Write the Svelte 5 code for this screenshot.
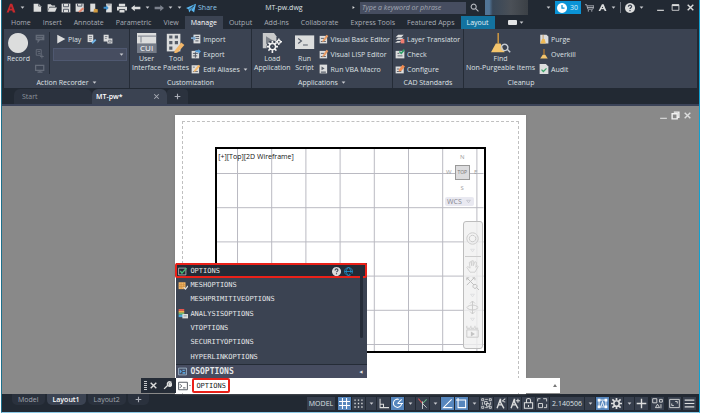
<script>
  let command = $state("OPTIONS");
  let activeTab = $state("Manage");

  const tabs = [
    "Home", "Insert", "Annotate", "Parametric", "View", "Manage", "Output",
    "Add-ins", "Collaborate", "Express Tools", "Featured Apps", "Layout",
  ];

  const suggestions = [
    { name: "MESHOPTIONS", icon: "mesh" },
    { name: "MESHPRIMITIVEOPTIONS" },
    { name: "ANALYSISOPTIONS", icon: "analysis" },
    { name: "VTOPTIONS" },
    { name: "SECURITYOPTIONS" },
    { name: "HYPERLINKOPTIONS" },
  ];

  const quickAccess = ["new", "open", "save", "saveas", "openweb", "saveweb", "print"];

  const statusItems = [
    { icon: "grid", label: "Grid", on: true },
    { icon: "snap", label: "Snap" },
    { caret: true },
    { icon: "ortho", label: "Ortho" },
    { icon: "polar", label: "Polar tracking", on: true },
    { caret: true },
    { icon: "iso", label: "Isometric" },
    { caret: true },
    { icon: "otrack", label: "Object tracking", on: true },
    { icon: "osnap", label: "Object snap", on: true },
    { caret: true },
    { icon: "select", label: "Selection" },
    { icon: "person", label: "Annotation visibility" },
    { icon: "personadd", label: "Auto scale" },
    { icon: "lock", label: "Lock viewport" },
    { icon: "maxview", label: "Maximize viewport" },
    { text: "2.140506" },
    { caret: true },
    { icon: "sync", label: "Sync scale", on: true },
    { icon: "gear", label: "Workspace" },
    { caret: true },
    { icon: "plus", label: "Annotation monitor" },
    { icon: "isolate", label: "Isolate objects", wide: true },
    { icon: "clean", label: "Clean screen", wide: true },
    { icon: "menu", label: "Customization" },
  ];

  const W = "#dcdddd";
  const G = "#7b818c";
  const B = "#6fb3e6";
  const O = "#f2b76a";

  // each part is [path, colour, stroke width]; without a width the path is filled
  const icons = {
    logo: [["M1 15L6.500 1h3.500l5 14h-4l-1-3H5.500l-1 3zM6.500 9h2.800L8 5z", "#c8292d"]],
    caret: [["M2 5h12l-6 7z", "#c9cbd0"]],
    right: [["M5 3l7 5-7 5z", W]],
    new: [["M1 1h8l4 4v9H1z", W], ["M9 1v4h4", "#222933", 1]],
    open: [["M1 2h5l2 2h5v2H4l-3 7z", W], ["M4 7h12l-3 7H1z", W]],
    save: [["M1 1h14v14H1z", W], ["M4 1v5h8V1M4 15v-5h8v5", "#4d5461", 1.500]],
    saveas: [["M1 1h13v13H1z", W], ["M4 1v4h7V1", "#4d5461", 1.500], ["M5 14l7-7 3 2-7 6z", "#e1836b"]],
    openweb: [["M2 1h8v13H2z", W], ["M8 9l6 1v5H7z", "#d19a3f"]],
    saveweb: [["M5 1h9v14H5z", W], ["M1 6h4V3l4 5-4 4V9H1z", "#3a8fd0"], ["M7 3h5", "#4d5461", 1]],
    print: [["M3 1h10v4H3zM0 6h16v6h-3v-2H3v2H0zM4 11h8v4H4z", W]],
    undo: [["M0 8l6-5v3h9v4H6v3z", W]],
    redo: [["M16 8l-6-5v3H1v4h9v3z", G]],
    share: [["M0 8L16 1l-3 14-5-4-3 4-1-5z", "#58b5ef"], ["M5 10l8-6-5 7", "#222933", 1]],
    search: [["M10.500 10.500L15 15M6.500 2a4.500 4.500 0 1 0 .1 0", "#b5b8bf", 2]],
    clock: [["M8 0a8 8 0 1 0 .1 0z", "#fff"], ["M8 3v5h4", "#0a93d6", 2]],
    cart: [["M0 3h3l2 8h9l2-6H4M4 8h11", "#b5b8bf", 1.500], ["M5 13h2v2H5zM11 13h2v2h-2z", "#b5b8bf"]],
    autodesk: [["M1 14L7 2h3l5 12h-3l-4-8-4 8z", W], ["M4 10h8", W, 2]],
    help: [["M8 0a8 8 0 1 0 .1 0z", W], ["M5.500 6c0-4 5.500-3 5 0-.3 1.500-2.500 2-2.500 3.500M8 11v2", "#394150", 2]],
    min: [["M2 13h12", W, 2]],
    max: [["M2 3h12v10H2z", W, 1.500], ["M2 4h12", W, 3]],
    close: [["M3 3l10 10M13 3L3 13", W, 2.500]],
    thinclose: [["M4 4l8 8M12 4l-8 8", "#a9adb6", 1.800]],
    plus: [["M8 1v14M1 8h14", W, 2]],
    smallplus: [["M8 3v10M3 8h10", "#a9adb6", 2]],
    record: [["M12.500 0a12.500 12.500 0 1 0 .1 0z", W]],
    message: [["M1 1h14v9H8l-4 5v-5H1z", "#646b78"], ["M3 4h10M3 7h8", "#3b4352", 1]],
    pause: [["M2 1h8v9H2zM4 4h4M5 7h4", "#646b78", 1.500], ["M11 9v6M8 12h6", "#646b78", 1.500]],
    base: [["M1 2h13v8H1zM4 13h8M8 9v5", "#646b78", 2]],
    play: [["M2 1l13 7-13 7z", W]],
    prefs: [["M1 1h9v12H1z", W], ["M3 4h5M3 7h5M3 10h4", "#4d5461", 1], ["M7 13l6-5 2 2-6 6z", B]],
    manage: [["M1 1h8v11H1zM7 7h8v8H7z", W], ["M3 4h4M3 7h3M9 10h4v3H9z", "#4d5461", 1]],
    cui: [["M0 0h24v25H0z", W], ["M1 4h23M5 4v8", "#8b9099", 1.500], ["M0 13h24v12H0z", "#747b87"]],
    palettes: [["M1 1h17v22H1z", W], ["M4 3h4v4H4zM11 3h4v4h-4zM4 10h4v4H4zM11 10h4v4h-4zM4 17h4v4H4z", "#555c68"], ["M11 22l8-10 4 3-8 9-5 2z", O]],
    import: [["M4 1h11v14H4z", W], ["M7 4h6M7 7h6M7 11h5", "#4d5461", 1.500], ["M0 5h4V2l4 5-4 4V8H0z", "#7ca8cf"]],
    export: [["M1 3h12v12H1z", W], ["M3 7h8M3 11h7M7 5v9", "#4d5461", 1.500], ["M7 2h5V0l4 4-4 4V5H7z", "#55a0dc"]],
    alias: [["M1 2h12v13H1z", W], ["M3 12h8M3 5h3", "#6c727c", 1.500], ["M5 10l7-9 3 2-7 8-4 2z", O]],
    load: [["M1 0h14l3 4v15H1z", "#c9cacb"], ["M5 4l8 5-8 5z", "#7d8289"], ["M13 13a4 4 0 1 0 .1 0", "#3b4352", 7], ["M13 13a4 4 0 1 0 .1 0M13 10v2M13 22v3M6 17h3M17 17h3M8 12l2 2M16 20l2 2M8 22l2-2M16 14l2-2", "#f2f2f2", 2], ["M21 9a2 2 0 1 0 .1 0M21 7v2M21 13v2M17 11h2M23 11h2", "#f2f2f2", 1.800]],
    script: [["M0 3h24v17H0z", W], ["M4 7l4 3-4 3M10 15h6", "#555c68", 1.500]],
    editor: [["M1 3h12v12H1z", W], ["M3 7h5M3 12h8", "#5b616c", 1.500], ["M6 10l6-9 3 2-6 8-4 2z", "#e89b63"]],
    macro: [["M1 1h12v14H1z", W], ["M4 4l5 3-5 3z", "#5b616c"], ["M3 13h8", "#5b616c", 2]],
    layer: [["M5 1h9l-4 4H1zM5 6h9l-4 3H1zM4 11h6l-3 3H0z", W], ["M9 8h6v7H9z", "#ee7d70"]],
    check: [["M1 3h14v12H1z", W], ["M4 7h3M4 11h8", "#5b616c", 1.500], ["M7 4l3 3 5-6", "#32a06a", 2.500]],
    configure: [["M1 4h13v11H1z", W], ["M3 8h4M3 12h7", "#5b616c", 1.500], ["M6 9l6-8 4 3-6 7-4 1z", "#ef8b50"]],
    find: [["M8 0h2v13H8z", "#c59343"], ["M6 13h6l5 11H0z", "#f4c56c"], ["M17 14a4 4 0 1 0 .1 0M20 20l4 4", "#c6cbd2", 1.800]],
    purge: [["M2 1h10l3 3v11H2z", W], ["M6 1h1v8H6z", "#b77b2c"], ["M5 8h4l2 7H2z", "#efb953"]],
    overkill: [["M7 0h2v9H7z", "#b77b2c"], ["M6 9h4l4 6H2z", "#f4c56c"]],
    audit: [["M1 0h10l4 4v12H1z", W], ["M4 9l3 3 5-5", "#3ca469", 2]],
    restore: [["M5 2h9v9h-3M2 5h9v9H2z", "#f2f2f2", 2.500]],
    mesh: [["M1 2h11v11H1z", O], ["M1 6h11M1 9h11M5 2v11M9 2v11", "#c98a3a", 1], ["M9 10l3 3 4-5", W, 2]],
    analysis: [["M1 0h9v3H1z", "#e6554d"], ["M1 3h9v3H1z", "#efb14d"], ["M1 6h9v3H1z", "#72bd69"], ["M1 9h7v4H1z", "#4aa5d8"], ["M7 8h9v7H7z", W], ["M9 11h5", "#8b9099", 1.500]],
    options: [["M1 2h13v12H1z", W, 1.200], ["M4 7l3 4 8-9", "#43bd76", 2.500]],
    globe: [["M8 1a7 7 0 1 0 .1 0M1 8h14M8 1c-5 4-5 10 0 14M8 1c5 4 5 10 0 14", "#2696d0", 1.500], ["M9 9l6 6", "#1b2531", 2]],
    sysvar: [["M1 2h14v12H1z", "#b9d4ea", 1.200], ["M3 4l4 4-4 4zM8 5h4v2H8zM8 9h5v3H8z", "#5aa4dc"]],
    wrench: [["M2 14l7-7M9 8c-3-4 1-8 5-6l-3 3 1 2 3-2c1 4-3 6-6 3", W, 2.500]],
    prompt: [["M1 2h14v12H1z", "#4e545d", 1.500], ["M3 5l3 3-3 3M8 11h4", "#4e545d", 1.500]],
    grid: [["M5 0v16M11 0v16M0 5h16M0 11h16", "#fff", 1.500]],
    snap: [["M2 2h2v2H2zM7 2h2v2H7zM12 2h2v2h-2zM2 7h2v2H2zM7 7h2v2H7zM12 7h2v2h-2zM2 12h2v2H2zM7 12h2v2H7zM12 12h2v2h-2z", W]],
    ortho: [["M3 1v13h13M3 9h5v5", W, 1.500]],
    polar: [["M14 8a6 6 0 1 1-4-6M8 8h8M8 8l6-6", "#fff", 1.500]],
    iso: [["M2 1l6 7", "#d64f50", 1.500], ["M14 2l-6 6", "#68b883", 1.500], ["M8 5v11M8 8l6 6", W, 1.200]],
    otrack: [["M14 2L2 14h13", "#fff", 1.500]],
    osnap: [["M3 3h11v11H3zM0 3h6M3 0v6", "#fff", 1.500]],
    select: [["M1 1h3v3H1zM12 1h3v3h-3zM1 12h3v3H1zM12 12h3v3h-3zM6 2h4M6 14h4M2 6v4M14 6v4M5 5h4v4H5zM8 8h4v4H8z", W, 1.200]],
    person: [["M8 1L3 15M8 6l5 9M4 10h6M8 1v6", W, 2], ["M10 5l5-4M12 5l3 1", W, 1.500]],
    personadd: [["M8 1L3 15M8 6l5 9M4 10h6M8 1v6", W, 2], ["M13 1v6M10 4h6", W, 1.500]],
    lock: [["M2 7h12v8H2zM5 7V3c0-3 6-3 6 0v4M8 10v3", W, 1.500]],
    maxview: [["M1 5V1h4M9 1h5v4M14 9v5h-4M2 8h6v6H2z", W, 1.300]],
    sync: [["M3 3h10v10H3z", "#fff", 1.300], ["M1 1h4v4H1zM11 1h4v4h-4zM1 11h4v4H1zM11 11h4v4h-4z", "#fff"], ["M6 12l2-7 2 7", "#fff", 1.300]],
    gear: [["M8 4a4 4 0 1 0 .1 0M8 0v3M8 13v3M0 8h3M13 8h3M2 2l3 3M11 11l3 3M14 2l-3 3M2 14l3-3", W, 2.500]],
    isolate: [["M1 1h6v6H1zM11 2h4v4h-4zM8 9l-3 5h6zM13 9v6", W, 1.300]],
    clean: [["M1 2h14v12H1zM4 8v3h3M9 5h3v3", W, 1.300]],
    menu: [["M1 3h14M1 8h14M1 13h14", W, 1.800]],
    down: [["M2 4h12l-6 8z", "#a9abb4", 1.500]],
    wheel: [["M8 1a7 7 0 1 0 .1 0M8 4a4 4 0 1 0 .1 0", "#cbcbcb", 1.200]],
    pan: [["M5 15L1 9l1-1 3 2-1-7 2-1 1 5V1h2v6l2-5 2 1-1 6 2-2 1 1-4 7z", "#cbcbcb", 1]],
    zoom: [["M1 1l9 9M10 1L1 10M1 4V1h3M8 1h3v3M11 9a2.500 2.500 0 1 0 .1 0M13 13l3 3", "#bebebe", 1.200]],
    orbit: [["M8 0v16M5 3l3-3 3 3M5 13l3 3 3-3M1 8c3-4 11-4 14 0-3 4-11 4-14 0", "#cbcbcb", 1.200]],
    motion: [["M1 1v3h4M6 1v3h4M11 1v3h4M1 6h14v9H1z", "#cbcbcb", 1.200], ["M6 8l5 3-5 3z", "#c4c4c4"]],
  };
</script>

{#snippet icon(name, size = "")}
  <svg class="icon {size}" viewBox={size === "big" ? "0 0 25 25" : "0 0 16 16"} aria-hidden="true">
    {#each icons[name] as [d, color, width]}
      <path {d} fill={width ? "none" : color} stroke={width ? color : "none"} stroke-width={width ?? 0} />
    {/each}
    {#if name === "cui"}
      <text class="cui-text" x="12" y="23">CUI</text>
    {/if}
  </svg>
{/snippet}

{#snippet tool(name, label, caret = false)}
  <button class="tool">
    {@render icon(name)}
    <span>{label}</span>
    {#if caret}{@render icon("caret", "tiny")}{/if}
  </button>
{/snippet}

{#snippet bigTool(name, first, second)}
  <button class="big-tool">
    {@render icon(name, "big")}
    <span>{first}</span>
    {#if second}<span>{second}</span>{/if}
  </button>
{/snippet}

<div class="window">
  <header class="titlebar">
    <div class="quick">
      <button class="logo" aria-label="Application menu">
        {@render icon("logo", "mid")}
        {@render icon("caret", "tiny")}
      </button>
      {#each quickAccess as name}
        <button aria-label={name}>{@render icon(name, "mid")}</button>
      {/each}
      <button aria-label="Undo">{@render icon("undo", "mid")}{@render icon("caret", "tiny")}</button>
      <button aria-label="Redo">{@render icon("redo", "mid")}{@render icon("caret", "tiny")}</button>
      <button aria-label="Customize">{@render icon("caret", "tiny")}</button>
      <button class="share">{@render icon("share", "mid")}<span>Share</span></button>
    </div>
    <h1>MT-pw.dwg</h1>
    <div class="info">
      {@render icon("right", "tiny")}
      <input class="search" type="search" aria-label="Search" placeholder="Type a keyword or phrase" />
      <button aria-label="Search">{@render icon("search")}</button>
      <span class="user"></span>
      {@render icon("caret", "tiny")}
      <button class="trial">{@render icon("clock", "mid")}<span>30</span></button>
      <button aria-label="App store">{@render icon("cart")}</button>
      <button aria-label="Autodesk">{@render icon("autodesk")}{@render icon("caret", "tiny")}</button>
      <span class="divider"></span>
      <button aria-label="Help">{@render icon("help", "mid")}{@render icon("caret", "tiny")}</button>
      <div class="window-controls">
        <button aria-label="Minimize">{@render icon("min")}</button>
        <button aria-label="Maximize">{@render icon("max")}</button>
        <button aria-label="Close">{@render icon("close")}</button>
      </div>
    </div>
  </header>

  <nav class="tabs">
    {#each tabs as tab}
      <button
        class:active={activeTab === tab}
        class:context={tab === "Layout"}
        onclick={() => (activeTab = tab)}
      >{tab}</button>
    {/each}
    <button class="minimize" aria-label="Minimize ribbon">
      <span class="pill"></span>
      {@render icon("caret", "tiny")}
    </button>
  </nav>

  <section class="ribbon">
    <div class="panel recorder">
      <div class="tools">
        {@render bigTool("record", "Record")}
        <div class="stack">
          {@render icon("message")}
          {@render icon("pause")}
          {@render icon("base")}
        </div>
        <div class="macros">
          <div class="macro-buttons">
            {@render tool("play", "Play")}
            <button aria-label="Preference">{@render icon("prefs", "mid")}</button>
            <button aria-label="Manage macros">{@render icon("manage", "mid")}</button>
          </div>
          <div class="macro-select">
            <select aria-label="Available action macro"><option></option></select>
            {@render icon("caret", "tiny")}
          </div>
        </div>
      </div>
      <div class="caption">Action Recorder {@render icon("caret", "tiny")}</div>
    </div>
    <div class="panel customization">
      <div class="tools">
        {@render bigTool("cui", "User", "Interface")}
        {@render bigTool("palettes", "Tool", "Palettes")}
        <div class="stack">
          {@render tool("import", "Import")}
          {@render tool("export", "Export")}
          {@render tool("alias", "Edit Aliases", true)}
        </div>
      </div>
      <div class="caption">Customization</div>
    </div>
    <div class="panel applications">
      <div class="tools">
        {@render bigTool("load", "Load", "Application")}
        {@render bigTool("script", "Run", "Script")}
        <div class="stack">
          {@render tool("editor", "Visual Basic Editor")}
          {@render tool("editor", "Visual LISP Editor")}
          {@render tool("macro", "Run VBA Macro")}
        </div>
      </div>
      <div class="caption">Applications {@render icon("caret", "tiny")}</div>
    </div>
    <div class="panel standards">
      <div class="tools">
        <div class="stack">
          {@render tool("layer", "Layer Translator")}
          {@render tool("check", "Check")}
          {@render tool("configure", "Configure")}
        </div>
      </div>
      <div class="caption">CAD Standards</div>
    </div>
    <div class="panel cleanup">
      <div class="tools">
        {@render bigTool("find", "Find", "Non-Purgeable Items")}
        <div class="stack">
          {@render tool("purge", "Purge")}
          {@render tool("overkill", "Overkill")}
          {@render tool("audit", "Audit")}
        </div>
      </div>
      <div class="caption">Cleanup</div>
    </div>
  </section>

  <nav class="documents">
    <button class="start">Start</button>
    <button class="current">MT-pw* {@render icon("thinclose")}</button>
    <button class="add" aria-label="New drawing">{@render icon("smallplus")}</button>
  </nav>

  <main class="canvas">
    <div class="doc-controls">
      <button aria-label="Minimize drawing">{@render icon("min")}</button>
      <button aria-label="Restore drawing">{@render icon("restore")}</button>
      <button aria-label="Close drawing">{@render icon("close")}</button>
    </div>
    <div class="paper">
      <div class="printable">
        <div class="viewport">
          <svg class="lines" aria-hidden="true">
            <defs>
              <pattern id="cells" width="34.2" height="34.2" x="20" y="24" patternUnits="userSpaceOnUse">
                <path d="M.5 0V34.200M0 .5H34.200" fill="none" stroke="#b9b9c1" />
              </pattern>
            </defs>
            <rect width="100%" height="100%" fill="url(#cells)" />
          </svg>
          <span class="view-label">[+][Top][2D Wireframe]</span>
          <div class="viewcube">
            <span class="north">N</span>
            <span>W</span>
            <span class="cube">TOP</span>
            <span>E</span>
            <span class="south">S</span>
          </div>
          <button class="wcs">WCS {@render icon("down", "tiny")}</button>
          <div class="navbar">
            {@render icon("wheel", "nav")}
            {@render icon("down", "tiny")}
            <hr />
            {@render icon("pan", "nav")}
            {@render icon("zoom", "nav")}
            {@render icon("down", "tiny")}
            {@render icon("orbit", "nav")}
            {@render icon("down", "tiny")}
            {@render icon("motion", "nav")}
          </div>
        </div>
      </div>
    </div>

    <div class="command">
      <div class="suggest">
        <button class="chosen">
          {@render icon("options")}
          <span>OPTIONS</span>
          {@render icon("help")}
          {@render icon("globe")}
        </button>
        <div class="list">
          {#each suggestions as item}
            <button>
              <span class="slot">{#if item.icon}{@render icon(item.icon, "mid")}{/if}</span>
              {item.name}
            </button>
          {/each}
        </div>
        <button class="variable">
          {@render icon("sysvar")}
          <span>OSOPTIONS</span>
          <span class="back">◂</span>
        </button>
        <span class="scroll"></span>
      </div>
      <div class="handle">
        <span class="grip"></span>
        <button aria-label="Close command line">{@render icon("close")}</button>
        <button aria-label="Customize command line">{@render icon("wrench")}</button>
      </div>
      <div class="entry">
        {@render icon("prompt", "mid")}
        <span class="prompt-caret"></span>
        <input aria-label="Command" bind:value={command} />
        <span class="history"></span>
      </div>
    </div>
  </main>

  <footer class="status">
    <nav class="layouts">
      <button>Model</button>
      <button class="active">Layout1</button>
      <button>Layout2</button>
      <button aria-label="New layout">{@render icon("smallplus")}</button>
    </nav>
    <div class="toggles">
      <button class="model">MODEL</button>
      {#each statusItems as item}
        {#if item.caret}
          <button class="more" aria-label="More">{@render icon("caret", "tiny")}</button>
        {:else if item.text}
          <button class="scale">{item.text}</button>
        {:else}
          <button class="toggle" class:on={item.on} class:wide={item.wide} aria-label={item.label}>
            {@render icon(item.icon, "status-icon")}
          </button>
        {/if}
      {/each}
    </div>
  </footer>
</div>

<style>
  :global(body) {
    margin: 0;
    background: #fff;
  }

  .window {
    box-sizing: border-box;
    display: flex;
    flex-direction: column;
    min-height: calc(100vh - 2px);
    margin: 0 2px 0 1px;
    border-left: 1px solid #1c6f8c;
    border-right: 1px solid #12a0cf;
    border-bottom: 1px solid #8cc9e6;
    background: #222933;
    color: #dfe1e4;
    font: 7px/9px "Open Sans", "Noto Sans", sans-serif;
  }

  button {
    display: flex;
    align-items: center;
    padding: 0;
    border: 0;
    background: none;
    color: inherit;
    font: inherit;
    white-space: nowrap;
    cursor: pointer;
  }

  .icon {
    flex: none;
    width: 9px;
    height: 9px;
  }

  .icon.tiny {
    width: 5px;
    height: 5px;
  }

  .icon.mid,
  .tool .icon:first-child,
  .stack > .icon {
    width: 10px;
    height: 10px;
  }

  .icon.status-icon {
    width: 11px;
    height: 11px;
  }

  .icon.big {
    width: 20px;
    height: 20px;
  }

  .cui-text {
    fill: #fff;
    font-size: 10px;
    text-anchor: middle;
  }

  .titlebar {
    display: flex;
    align-items: center;
    height: 15px;
    padding: 0 4px;
  }

  .quick {
    display: flex;
    align-items: center;
    gap: 4px;
  }

  .quick button {
    gap: 4px;
  }

  .quick .logo {
    margin-right: 4px;
  }

  .quick .share {
    gap: 2px;
    color: #8cc4e8;
  }

  h1 {
    flex: 1;
    margin: 0;
    font: inherit;
    text-align: center;
  }

  .info {
    display: flex;
    align-items: center;
    gap: 4px;
  }

  .info button {
    gap: 4px;
  }

  .search {
    box-sizing: border-box;
    width: 106px;
    height: 12px;
    padding: 0 2px;
    border: 0;
    background: #464d60;
    color: #d5d7da;
    font: italic 7px/9px "Open Sans", sans-serif;
  }

  .search::placeholder {
    color: #a4a9b4;
  }

  .user {
    width: 43px;
    height: 15px;
    margin: 0 14px 0 2px;
    background: linear-gradient(90deg, #527597 10%, #384758 18%, #4b5057 60%, #3b4046);
  }

  .info .trial {
    height: 13px;
    padding: 0 3px 0 2px;
    gap: 3px;
    background: #0a93d6;
    color: #d9effb;
  }

  .divider {
    width: 1px;
    height: 11px;
    background: #6b717c;
  }

  .window-controls {
    display: flex;
    gap: 6px;
    margin-left: 8px;
  }

  .tabs {
    display: flex;
    height: 13px;
    margin-top: 1px;
    padding-left: 3px;
  }

  .tabs button {
    padding: 0 6px;
    color: #a9adb5;
  }

  .tabs button.active {
    background: #3b4352;
    color: #fff;
  }

  .tabs button.context {
    background: #1373a0;
    color: #e4f2f8;
  }

  .tabs .minimize {
    gap: 2px;
  }

  .pill {
    width: 9px;
    height: 5px;
    margin-left: 7px;
    border-radius: 1px;
    background: #e3e4e6;
  }

  .ribbon {
    display: flex;
    height: 59px;
    margin: 0 2px;
    background: #3b4352;
  }

  .panel {
    display: flex;
    flex-direction: column;
    box-sizing: border-box;
    border-right: 1px solid #252c37;
  }

  .panel:last-child {
    border-right: 0;
  }

  .recorder {
    width: 126px;
  }

  .customization {
    width: 122px;
  }

  .applications {
    width: 141px;
  }

  .standards {
    width: 71px;
  }

  .cleanup {
    width: 114px;
  }

  .tools {
    display: flex;
    flex: 1;
    gap: 2px;
    padding: 3px 2px 0;
  }

  .applications .tools,
  .cleanup .tools {
    gap: 4px;
  }

  .stack {
    display: flex;
    flex-direction: column;
    justify-content: space-between;
    padding: 2px 0;
  }

  .tool {
    gap: 2px;
    height: 10px;
  }

  .tool .tiny {
    margin-left: 1px;
  }

  .big-tool {
    flex-direction: column;
    align-self: flex-start;
    padding-top: 1px;
  }

  .big-tool .icon {
    margin-bottom: 1px;
  }

  .caption {
    display: flex;
    align-items: center;
    justify-content: center;
    gap: 3px;
    height: 12px;
  }

  .recorder .tools {
    padding-left: 3px;
  }

  .recorder .stack {
    padding-left: 3px;
  }

  .macros {
    flex: 1;
    margin: 0 0 2px 2px;
    padding: 2px 0 0 3px;
    border-left: 1px solid #252c37;
  }

  .macro-buttons {
    display: flex;
    align-items: center;
    gap: 6px;
    padding-left: 3px;
  }

  .macro-select {
    display: flex;
    align-items: center;
    height: 11px;
    margin-top: 4px;
    padding-right: 2px;
    border: 1px solid #4f5870;
    background: #464d60;
  }

  .macro-select select {
    flex: 1;
    width: 20px;
    height: 11px;
    border: 0;
    background: transparent;
    appearance: none;
  }

  .documents {
    display: flex;
    height: 15px;
    margin-top: 1px;
    padding-left: 12px;
    border-bottom: 2px solid #3b4358;
  }

  .documents .start {
    width: 78px;
    padding-left: 8px;
    border-radius: 6px 6px 0 0;
    background: #2b323e;
    color: #8d929c;
  }

  .documents .current {
    justify-content: space-between;
    width: 75px;
    padding: 0 6px 0 4px;
    border-radius: 6px 6px 0 0;
    background: #3b4352;
    color: #fff;
    font-weight: 600;
  }

  .documents .add {
    padding: 0 6px;
    border-radius: 4px 4px 0 0;
    background: #2b323e;
  }

  .canvas {
    position: relative;
    display: flex;
    flex: 1;
    justify-content: center;
    background: #898989;
  }

  .doc-controls {
    position: absolute;
    top: 5px;
    right: 7px;
    display: flex;
    gap: 3px;
  }

  .paper {
    display: flex;
    width: calc(50% + 2px);
    margin-top: 9px;
    background: #fff;
    box-shadow: 0 0 2px #777;
  }

  .printable {
    display: flex;
    flex: 1;
    margin: 6px 7px 0;
    padding: 25px 32px 41px;
    border: 1px dashed #c0c0c0;
    border-bottom: 0;
  }

  .viewport {
    position: relative;
    flex: 1;
    border: 2px solid #000;
  }

  .lines {
    position: absolute;
    width: 100%;
    height: 100%;
  }

  .view-label {
    position: absolute;
    top: 3px;
    left: 1px;
    color: #111;
  }

  .viewcube {
    position: absolute;
    top: 2px;
    right: 4px;
    display: grid;
    grid-template-columns: 8px 15px 8px;
    grid-template-rows: 12px 15px 12px;
    gap: 2px;
    place-items: center;
    color: #a0a0a0;
    font-size: 6px;
  }

  .north,
  .south {
    grid-column: 1 / -1;
  }

  .cube {
    box-sizing: border-box;
    width: 15px;
    height: 15px;
    border: 1px solid #999;
    background: #dcdcde;
    color: #777;
    font-size: 5px;
    line-height: 13px;
    text-align: center;
  }

  .wcs {
    position: absolute;
    top: 48px;
    right: 10px;
    gap: 4px;
    padding: 0 3px 0 2px;
    border-radius: 2px;
    background: #e9e9f1;
    color: #85858d;
  }

  .navbar {
    position: absolute;
    top: 72px;
    right: 1px;
    bottom: 2px;
    box-sizing: border-box;
    display: flex;
    flex-direction: column;
    align-items: center;
    justify-content: space-between;
    width: 20px;
    padding: 10px 0;
    border: 1px solid #bdbdbd;
    border-radius: 3px;
    background: rgba(240, 240, 240, 0.8);
  }

  .navbar hr {
    width: 16px;
    margin: 0;
    border: 0;
    border-top: 1px solid #ccc;
  }

  .icon.nav {
    width: 13px;
    height: 13px;
  }

  .navbar .tiny {
    opacity: 0.5;
  }

  .command {
    position: absolute;
    right: 20%;
    bottom: 1px;
    left: 20%;
    display: flex;
    height: 15px;
    font-family: "DejaVu Sans Mono", monospace;
  }

  .handle {
    display: flex;
    align-items: center;
    gap: 5px;
    box-sizing: border-box;
    width: 35px;
    padding-left: 3px;
    background: #252c37;
  }

  .grip {
    width: 3px;
    height: 10px;
    margin-right: -3px;
    background: repeating-linear-gradient(#c7c9cc 0 1px, transparent 1px 2px);
  }

  .entry {
    position: relative;
    display: flex;
    flex: 1;
    align-items: center;
    gap: 1px;
    padding: 0 3px 0 2px;
    background: #fff;
  }

  .prompt-caret {
    border: 1px solid transparent;
    border-top-color: #555;
  }

  .entry input {
    box-sizing: border-box;
    width: 38px;
    height: 15px;
    padding: 0 2px;
    border: 2px solid #ea2119;
    border-radius: 2px;
    background: #fff;
    color: #222;
    font: inherit;
    outline: 0;
  }

  .history {
    margin-left: auto;
    border: 2px solid transparent;
    border-top: 0;
    border-bottom: 3px solid #777;
  }

  .suggest {
    position: absolute;
    bottom: 100%;
    left: 35px;
    display: flex;
    flex-direction: column;
    width: 191px;
    background: #3b4352;
    color: #e4e6e8;
  }

  .suggest button {
    gap: 3px;
    padding: 1px 0 0 2px;
  }

  .suggest .chosen {
    height: 15px;
    margin-left: -1px;
    padding: 1px 12px 0 1px;
    border: 2px solid #ea2119;
    border-radius: 2px;
    background: #242b36;
  }

  .chosen span,
  .variable span:nth-of-type(1) {
    flex: 1;
    text-align: left;
  }

  .list {
    display: grid;
    grid-auto-rows: 1fr;
    height: 86px;
  }

  .slot {
    display: flex;
    width: 9px;
  }

  .suggest .variable {
    height: 14px;
    padding: 0 4px 0 2px;
    border-top: 1px solid #252c37;
    background: #464c60;
    font-size: 8px;
    font-weight: bold;
  }

  .scroll {
    position: absolute;
    top: 3px;
    right: 4px;
    width: 3px;
    height: 72px;
    border-radius: 2px;
    background: #252c38;
  }

  .status {
    display: flex;
    align-items: center;
    justify-content: space-between;
    height: 18px;
    padding: 0 3px 0 10px;
  }

  .layouts {
    display: flex;
    align-self: flex-start;
    gap: 2px;
  }

  .layouts button {
    height: 11px;
    padding: 0 6px;
    border-radius: 0 0 5px 5px;
    background: #2a313d;
    color: #a1a6af;
  }

  .layouts .active {
    background: #3b4352;
    color: #fff;
    font-weight: 600;
  }

  .toggles {
    display: flex;
    gap: 1px;
  }

  .toggles button {
    justify-content: center;
    height: 13px;
    background: #373f4d;
  }

  .toggles .model {
    width: 28px;
    margin-right: 2px;
  }

  .toggles .toggle {
    width: 13px;
  }

  .toggles .more {
    width: 10px;
  }

  .toggles .scale {
    width: 34px;
  }

  .toggles .on {
    background: #5686bd;
  }

  .toggles .wide {
    margin: 0 1px 0 2px;
  }
</style>
